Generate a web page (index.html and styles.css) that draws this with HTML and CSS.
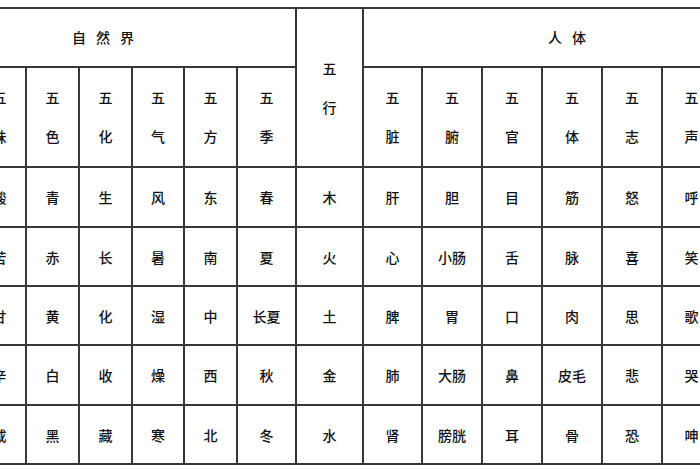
FILE: index.html
```html
<!DOCTYPE html>
<html lang="zh">
<head>
<meta charset="utf-8">
<title>五行配属表</title>
<link rel="stylesheet" href="styles.css">
</head>
<body>
<div class="frame">
<table class="wx">
  <colgroup>
    <col class="c53"><col class="c53"><col class="c53"><col class="c53"><col class="c52"><col class="c53"><col class="c59">
    <col class="c67">
    <col class="c59"><col class="c60"><col class="c60"><col class="c60"><col class="c60"><col class="c59"><col class="c60">
  </colgroup>
  <tr class="r-top">
    <th colspan="7" class="group">自然界</th>
    <th rowspan="2" class="mid">五<br>行</th>
    <th colspan="7" class="group">人体</th>
  </tr>
  <tr class="r-head">
    <th>五<br>音</th><th>五<br>味</th><th>五<br>色</th><th>五<br>化</th><th>五<br>气</th><th>五<br>方</th><th>五<br>季</th>
    <th>五<br>脏</th><th>五<br>腑</th><th>五<br>官</th><th>五<br>体</th><th>五<br>志</th><th>五<br>声</th><th>五<br>变</th>
  </tr>
  <tr class="r60">
    <td>角</td><td>酸</td><td>青</td><td>生</td><td>风</td><td>东</td><td>春</td><td>木</td><td>肝</td><td>胆</td><td>目</td><td>筋</td><td>怒</td><td>呼</td><td>握</td>
  </tr>
  <tr class="r59">
    <td>徵</td><td>苦</td><td>赤</td><td>长</td><td>暑</td><td>南</td><td>夏</td><td>火</td><td>心</td><td>小肠</td><td>舌</td><td>脉</td><td>喜</td><td>笑</td><td>忧</td>
  </tr>
  <tr class="r59">
    <td>宫</td><td>甘</td><td>黄</td><td>化</td><td>湿</td><td>中</td><td>长夏</td><td>土</td><td>脾</td><td>胃</td><td>口</td><td>肉</td><td>思</td><td>歌</td><td>哕</td>
  </tr>
  <tr class="r60">
    <td>商</td><td>辛</td><td>白</td><td>收</td><td>燥</td><td>西</td><td>秋</td><td>金</td><td>肺</td><td>大肠</td><td>鼻</td><td>皮毛</td><td>悲</td><td>哭</td><td>咳</td>
  </tr>
  <tr class="r59">
    <td>羽</td><td>咸</td><td>黑</td><td>藏</td><td>寒</td><td>北</td><td>冬</td><td>水</td><td>肾</td><td>膀胱</td><td>耳</td><td>骨</td><td>恐</td><td>呻</td><td>栗</td>
  </tr>
</table>
</div>
</body>
</html>
```
FILE: styles.css
```css
html, body {
  margin: 0;
  padding: 0;
  background: #ffffff;
  overflow: hidden;
}
body {
  width: 700px;
  height: 470px;
  font-family: "Noto Sans CJK SC", "Noto Sans", sans-serif;
  color: #111111;
}
.frame {
  padding-top: 7px;
}
.wx {
  border-collapse: collapse;
  table-layout: fixed;
  width: 861px;
  margin-left: -81px;
  font-size: 14px;
}
.c52 { width: 52px; }
.c53 { width: 53px; }
.c59 { width: 59px; }
.c60 { width: 60px; }
.c67 { width: 67px; }
.wx th, .wx td {
  border: 2px solid #383838;
  padding: 0;
  text-align: center;
  vertical-align: middle;
  font-weight: 500;
  white-space: nowrap;
}
.wx th {
  line-height: 39px;
}
.wx td {
  line-height: 20px;
}
.r-top { height: 59px; }
.r-head { height: 100px; }
.r60 { height: 60px; }
.r59 { height: 59px; }
.group {
  letter-spacing: 10px;
  padding-left: 10px;
}
```
